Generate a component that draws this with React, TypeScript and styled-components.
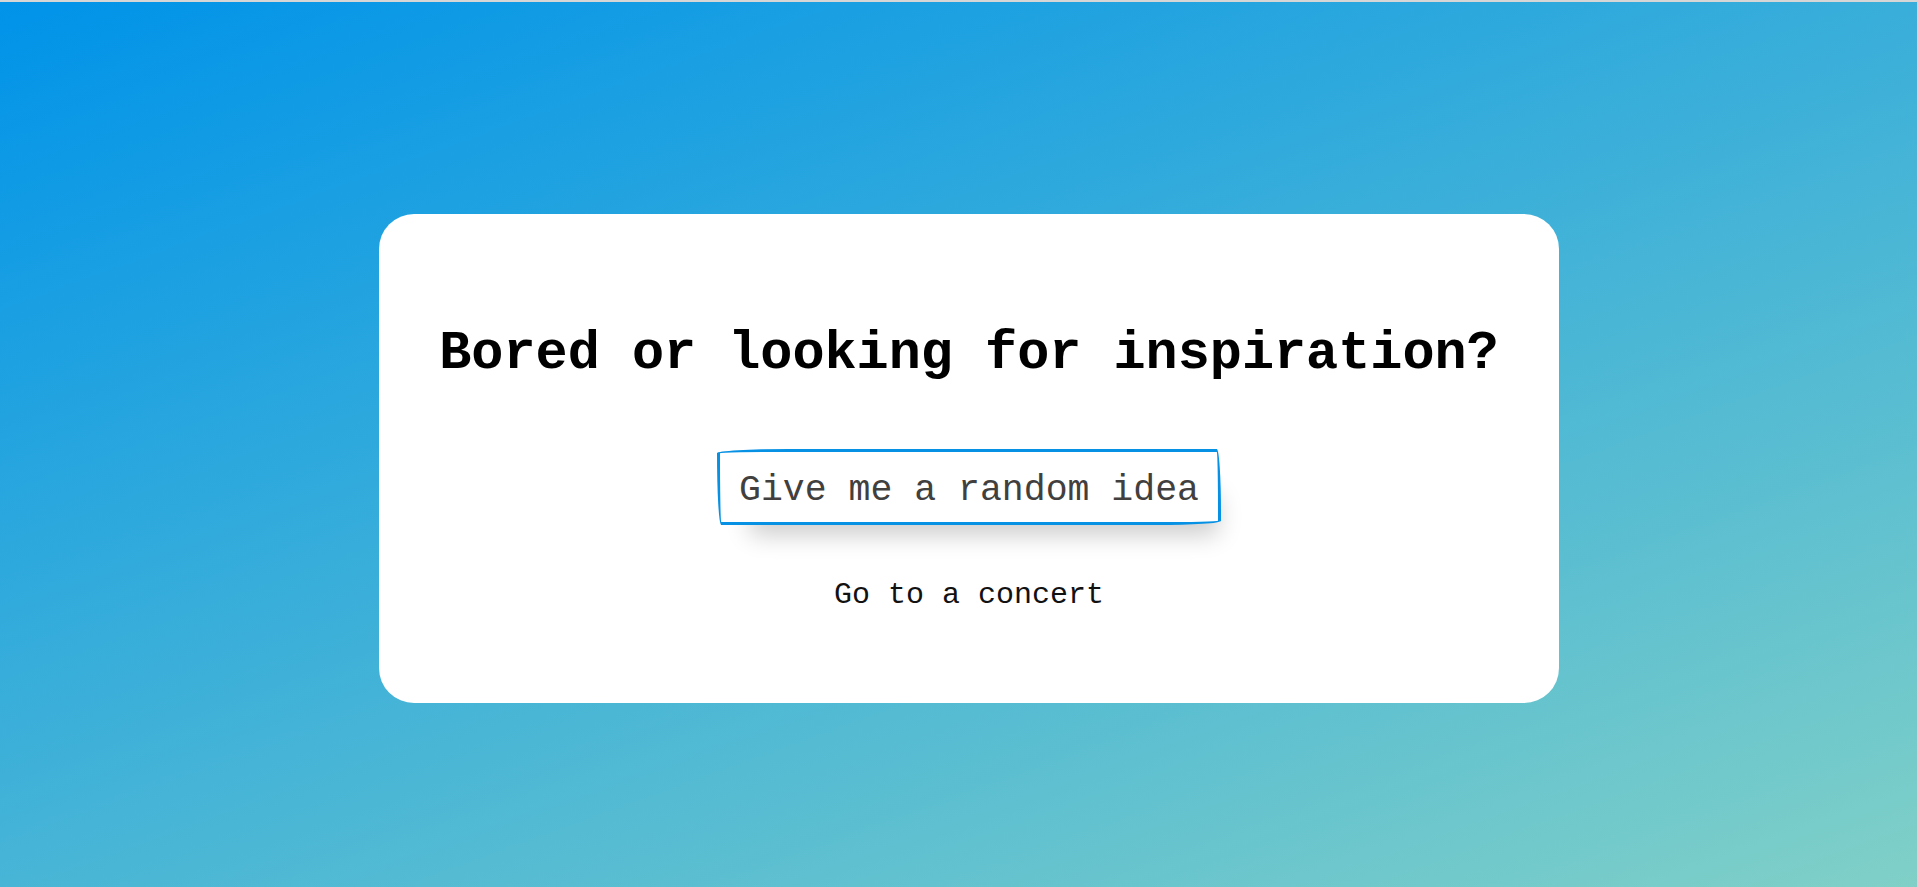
import React from "react";
import styled, { createGlobalStyle } from "styled-components";

const GlobalStyle = createGlobalStyle`
  html, body {
    margin: 0;
    padding: 0;
    height: 100%;
  }
  body {
    font-family: "Liberation Mono", "DejaVu Sans Mono", monospace;
    background: #ffffff;
  }
  #root {
    min-height: 100%;
  }
`;

const Page = styled.div`
  display: flex;
  flex-direction: column;
  min-height: 887px;
`;

const TopStrip = styled.div`
  height: 2px;
  background: #d6d6d6;
`;

const Backdrop = styled.main`
  flex: 1;
  display: flex;
  justify-content: center;
  align-items: flex-start;
  padding: 212px 0 0 21px;
  background-image: linear-gradient(160deg, #0093e9 0%, #80d0c7 100%);
`;

const Card = styled.section`
  width: 1180px;
  box-sizing: border-box;
  background: #ffffff;
  border-radius: 35px;
  padding: 110px 40px 90px;
  display: flex;
  flex-direction: column;
  align-items: center;
`;

const Heading = styled.h1`
  margin: 0;
  font-family: "Liberation Mono", "DejaVu Sans Mono", monospace;
  font-size: 53.5px;
  line-height: 60px;
  font-weight: 700;
  color: #000000;
  text-align: center;
`;

const IdeaButton = styled.button`
  margin-top: 65px;
  background: #ffffff;
  border: 3px solid #0791e4;
  border-radius: 255px 15px 225px 15px / 15px 225px 15px 255px;
  box-shadow: rgba(0, 0, 0, 0.2) 15px 28px 25px -18px;
  color: #41403e;
  font-family: "Liberation Mono", "DejaVu Sans Mono", monospace;
  font-size: 36.5px;
  line-height: 36px;
  padding: 21px 19px 13px;
  cursor: pointer;
`;

const Idea = styled.p`
  margin: 52px 0 0;
  font-family: "Liberation Mono", "DejaVu Sans Mono", monospace;
  font-size: 30px;
  line-height: 36px;
  color: #111111;
  text-align: center;
`;

export default function App() {
  return (
    <>
      <GlobalStyle />
      <Page>
        <TopStrip />
        <Backdrop>
          <Card>
            <Heading>Bored or looking for inspiration?</Heading>
            <IdeaButton type="button">Give me a random idea</IdeaButton>
            <Idea>Go to a concert</Idea>
          </Card>
        </Backdrop>
      </Page>
    </>
  );
}
